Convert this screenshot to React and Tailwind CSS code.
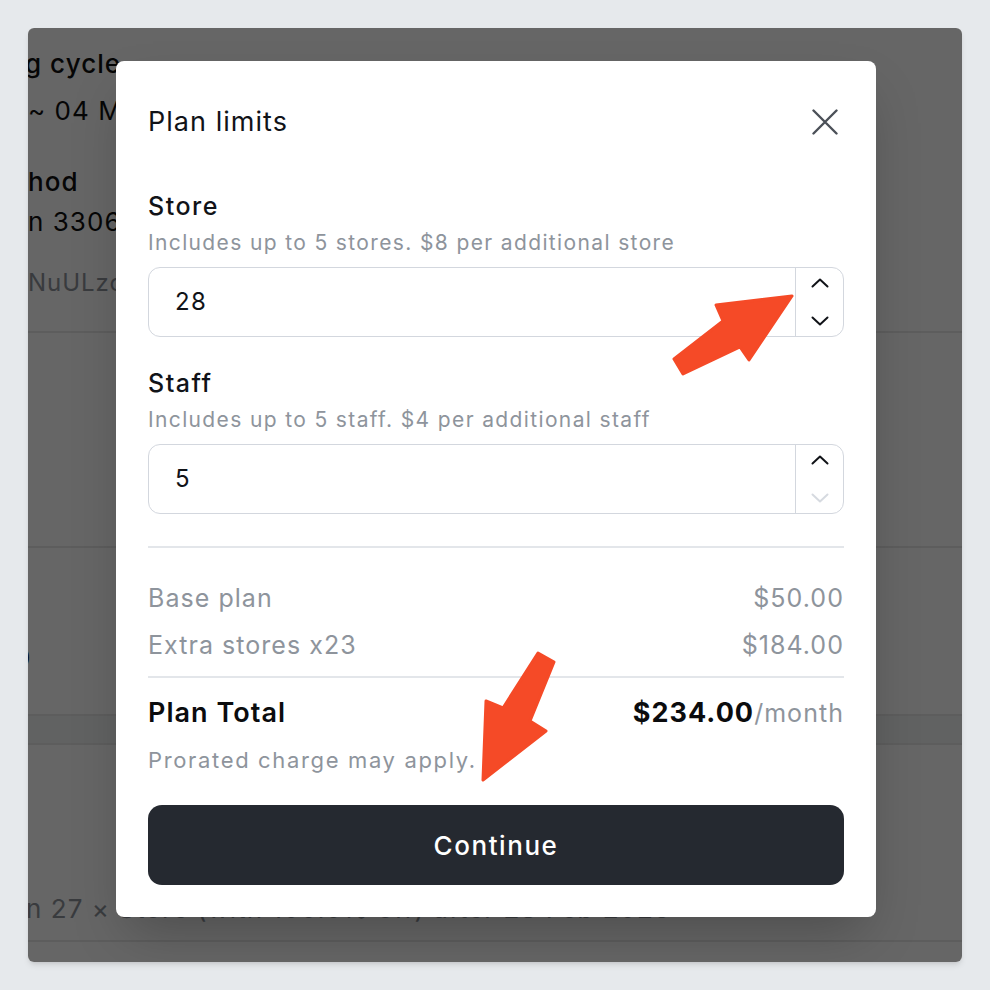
import React from 'react';

function Chevron({ dir = 'up', muted = false }) {
  return (
    <svg width="18" height="10" viewBox="0 0 18 10" fill="none">
      <polyline
        points={dir === 'up' ? '1.5,8.5 9,1.5 16.5,8.5' : '1.5,1.5 9,8.5 16.5,1.5'}
        stroke={muted ? '#d6dae0' : '#111318'}
        strokeWidth="2"
        strokeLinecap="round"
        strokeLinejoin="round"
      />
    </svg>
  );
}

function NumberField({ value, downDisabled }) {
  return (
    <div className="flex h-[70px] rounded-[12px] border-[1.5px] border-[#d3d7de] bg-white">
      <div className="flex flex-1 items-center pl-[26px] text-[24px] tracking-[0.06em] text-[#111318]">{value}</div>
      <div className="flex w-[48px] flex-col items-center justify-between border-l-[1.5px] border-[#d3d7de] py-[10px]">
        <Chevron dir="up" />
        <Chevron dir="down" muted={downDisabled} />
      </div>
    </div>
  );
}

function Field({ label, hint, value, downDisabled }) {
  return (
    <div>
      <div className="h-[32px] text-[25px] font-medium leading-[32px] tracking-[0.06em] text-[#111318]">{label}</div>
      <div className="mt-[7px] h-[28px] text-[21px] leading-[28px] tracking-[0.065em] text-[#8e949c]">{hint}</div>
      <div className="mt-[10px]">
        <NumberField value={value} downDisabled={downDisabled} />
      </div>
    </div>
  );
}

function PlanLimitsDialog() {
  return (
    <div className="w-[760px] rounded-[8px] bg-white px-[32px] pb-[32px] pt-[31px] tracking-[0.065em] shadow-2xl">
      <div className="flex h-[60px] items-center justify-between">
        <h2 className="text-[27px] font-normal text-[#111318]">Plan limits</h2>
        <button className="mr-[5px] flex h-[28px] w-[28px] items-center justify-center">
          <svg width="26" height="26" viewBox="0 0 26 26" fill="none">
            <path d="M1.5 1.5L24.5 24.5M24.5 1.5L1.5 24.5" stroke="#4b5058" strokeWidth="2.4" strokeLinecap="round" />
          </svg>
        </button>
      </div>

      <div className="mt-[38px]">
        <Field label="Store" hint="Includes up to 5 stores. $8 per additional store" value="28" />
      </div>
      <div className="mt-[30px]">
        <Field label="Staff" hint="Includes up to 5 staff. $4 per additional staff" value="5" downDisabled />
      </div>

      <div className="mt-[32px] h-[2px] bg-[#e3e6ea]" />

      <div className="mt-[35px] flex h-[32px] items-center justify-between text-[25px] text-[#8e949c]">
        <span>Base plan</span>
        <span>$50.00</span>
      </div>
      <div className="mt-[15px] flex h-[32px] items-center justify-between text-[25px] text-[#8e949c]">
        <span>Extra stores x23</span>
        <span>$184.00</span>
      </div>

      <div className="mt-[14px] h-[2px] bg-[#e3e6ea]" />

      <div className="mt-[18px] flex h-[34px] items-center justify-between">
        <span className="text-[27px] font-semibold text-[#0b0c0e]">Plan Total</span>
        <span className="text-[27px]">
          <span className="font-bold text-[#0b0c0e]">$234.00</span>
          <span className="text-[25px] text-[#8e949c]">/month</span>
        </span>
      </div>
      <div className="mt-[15px] h-[30px] text-[22px] leading-[30px] tracking-[0.075em] text-[#8e949c]">Prorated charge may apply.</div>

      <button className="mt-[30px] flex h-[80px] w-full items-center justify-center rounded-[14px] bg-[#252930] text-[26px] font-medium tracking-[0.06em] text-white">
        Continue
      </button>
    </div>
  );
}

function BackgroundPage() {
  return (
    <div className="flex h-full flex-col text-[#111]">
      <div className="pt-[18px]">
        <div className="-ml-[3px] h-[36px] text-[26px] font-medium leading-[36px] tracking-[0.04em]">g cycle</div>
        <div className="mt-[11px] h-[36px] text-[26px] leading-[36px] tracking-[0.04em]">~ 04 Mar 2025</div>
        <div className="mt-[35px] h-[36px] text-[26px] font-medium leading-[36px] tracking-[0.04em]">hod</div>
        <div className="mt-[4px] h-[36px] text-[26px] leading-[36px] tracking-[0.04em]">n 3306</div>
        <div className="mt-[25px] h-[36px] text-[24px] leading-[36px] tracking-[0.04em] text-[#8e949c]">NuULzoQx</div>
      </div>
      <div className="mt-[30px] h-[215px] border-t-2 border-[#e8e8e8]" />
      <div className="h-[168px] border-t-2 border-[#e8e8e8]">
        <div className="mt-[92px] -ml-[14px] text-[26px] leading-[36px] text-[#111]">0</div>
      </div>
      <div className="h-[31px] border-y-2 border-[#e8e8e8] bg-[#f3f6f4]" />
      <div className="flex h-[195px] items-end pb-[13px]">
        <div className="-ml-[2px] text-[26px] leading-[36px] tracking-[0.04em] text-[#8e949c]">
          n 27 × Store (with 100.0% off) after 28 Feb 2025
        </div>
      </div>
      <div className="flex-1 border-t-2 border-[#e8e8e8]" />
    </div>
  );
}

export default function App() {
  return (
    <div
      className="relative h-[990px] w-[990px] bg-[#e6e9ec] p-[28px]"
      style={{ fontFamily: 'Inter, "Noto Sans", sans-serif' }}
    >
      <div className="relative h-full overflow-hidden rounded-[6px] bg-white shadow-md">
        <BackgroundPage />
        <div className="absolute inset-0 flex items-start justify-center bg-black/60 pl-[2px] pt-[33px]">
          <PlanLimitsDialog />
        </div>
      </div>

      <svg className="pointer-events-none absolute inset-0" width="990" height="990" viewBox="0 0 990 990">
        <polygon
          points="792,296 716,305 723,321 674,359 683,374 740,347 749,360"
          fill="#f54a27"
          stroke="#f54a27"
          strokeWidth="3"
          strokeLinejoin="round"
        />
        <polygon
          points="538,653 554,662 530,721 546,731 483,780 486,701 503,708"
          fill="#f54a27"
          stroke="#f54a27"
          strokeWidth="3"
          strokeLinejoin="round"
        />
      </svg>
    </div>
  );
}
